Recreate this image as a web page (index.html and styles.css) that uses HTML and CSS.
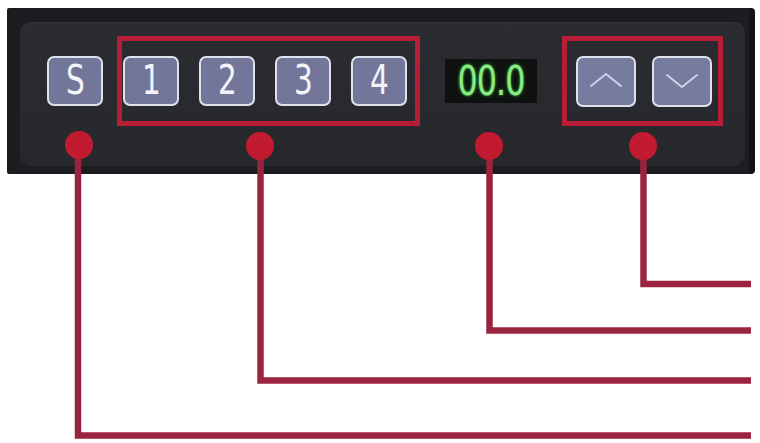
FILE: index.html
```html
<!DOCTYPE html>
<html lang="en">
<head>
<meta charset="utf-8">
<title>Control panel</title>
<link rel="stylesheet" href="styles.css">
</head>
<body>
<div class="page">
  <div class="panel">
    <div class="inner">
      <div class="row">
        <div class="key"><span class="glyph">S</span></div>
        <div class="group group-num">
          <div class="key"><span class="glyph">1</span></div>
          <div class="key"><span class="glyph">2</span></div>
          <div class="key"><span class="glyph">3</span></div>
          <div class="key"><span class="glyph">4</span></div>
        </div>
        <div class="display"><span class="digits">00.0</span></div>
        <div class="group group-arrow">
          <div class="key key-arrow">
            <svg width="34" height="20" viewBox="0 0 34 20"><path d="M2 15 L17 3 L32 15" fill="none" stroke="#cfd2e4" stroke-width="2" stroke-linecap="round" stroke-linejoin="round"/></svg>
          </div>
          <div class="key key-arrow">
            <svg width="34" height="20" viewBox="0 0 34 20"><path d="M2 4 L17 16 L32 4" fill="none" stroke="#cfd2e4" stroke-width="2" stroke-linecap="round" stroke-linejoin="round"/></svg>
          </div>
        </div>
      </div>
    </div>
  </div>
  <svg class="callouts" width="760" height="443" viewBox="0 0 760 443">
    <g fill="none" stroke="#9a2440" stroke-width="6.5">
      <path d="M78 150 V435.5 H751"/>
      <path d="M260.5 150 V380.5 H751"/>
      <path d="M489.5 150 V330.5 H751"/>
      <path d="M643.5 150 V284 H751"/>
    </g>
    <g fill="#c21a31">
      <circle cx="79" cy="145" r="14"/>
      <circle cx="260" cy="146" r="14"/>
      <circle cx="489" cy="146" r="14"/>
      <circle cx="643" cy="146" r="14"/>
    </g>
  </svg>
</div>
</body>
</html>
```

FILE: styles.css
```css
html, body {
  margin: 0;
  padding: 0;
  background: #ffffff;
}

.page {
  position: relative;
  width: 760px;
  height: 443px;
  overflow: hidden;
  padding: 8px 0 0 7px;
  box-sizing: border-box;
}

.panel {
  width: 748px;
  height: 166px;
  box-sizing: border-box;
  background: #1c1d20;
  border-right: 6px solid #121315;
  border-radius: 2px 4px 4px 2px;
  padding: 14px 4px 8px 13px;
}

.inner {
  height: 100%;
  box-sizing: border-box;
  background: linear-gradient(#2b2c31, #27282c);
  border-radius: 12px;
  padding: 14px 0 0 27px;
  box-shadow: inset 0 1px 0 #34353a;
}

.row {
  display: flex;
  align-items: center;
  height: 90px;
}

.key {
  width: 56px;
  height: 50px;
  box-sizing: border-box;
  border: 2.5px solid #dfe1ec;
  border-radius: 7px;
  background: #72779a;
  color: #f3f3f8;
  font-family: "DejaVu Sans Condensed", "DejaVu Sans", sans-serif;
  font-stretch: condensed;
  font-size: 40px;
  line-height: 44px;
  text-align: center;
  flex: none;
}

.glyph {
  display: inline-block;
  transform: scaleX(0.82);
}

.group {
  display: flex;
  align-items: center;
  height: 90px;
  box-sizing: border-box;
  border: 5.5px solid #b81d37;
}

.group-num {
  margin-left: 14px;
  width: 303px;
  padding-left: 1px;
  gap: 20px;
}

.display {
  margin-left: 25px;
  width: 92px;
  height: 44px;
  background: #0f1110;
  color: #8aea85;
  font-family: "DejaVu Sans Condensed", "DejaVu Sans", sans-serif;
  font-stretch: condensed;
  font-size: 41px;
  line-height: 44px;
  text-align: center;
  text-shadow: 0 0 2px #2f9f33, 0 0 4px #2a8f2e;
  flex: none;
}

.digits {
  display: inline-block;
  letter-spacing: -1px;
  transform: scaleX(0.86);
}

.group-arrow {
  margin-left: 25px;
  width: 161px;
  padding-left: 8.5px;
  gap: 16px;
}

.key-arrow {
  width: 60px;
  height: 51px;
  display: flex;
  align-items: center;
  justify-content: center;
  background: #767c9e;
}

.callouts {
  position: absolute;
  left: 0;
  top: 0;
  pointer-events: none;
}
```
